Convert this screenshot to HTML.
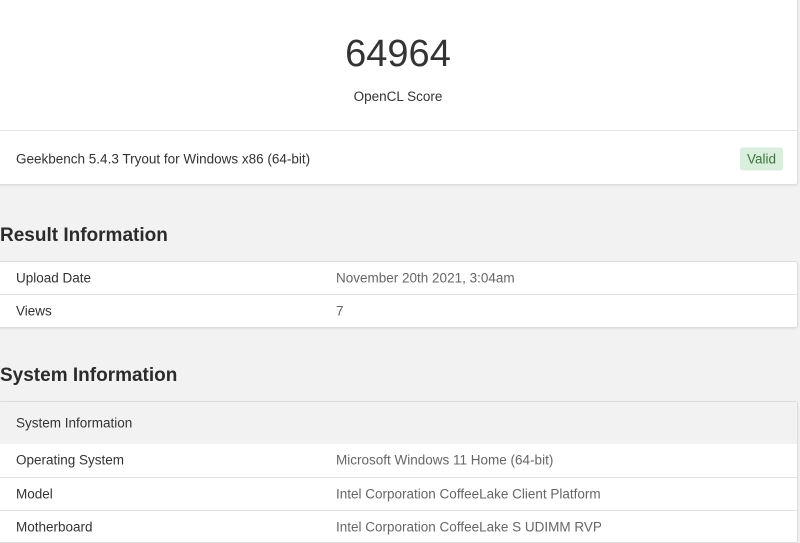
<!DOCTYPE html>
<html><head><style>
body{margin:0;width:800px;height:533px;overflow:hidden;background:#f2f2f2;font-family:"Liberation Sans",sans-serif;color:#333;}
.card{position:absolute;left:-2px;width:798px;background:#fff;border:1px solid #ddd;border-radius:3px;box-shadow:0 1px 2px rgba(0,0,0,.08);}
.row{position:absolute;left:0;right:0;border-top:1px solid #e3e3e3;font-size:13.5px;}
.row span{position:absolute;top:50%;transform:translateY(-50%);}
.k{left:17px;color:#333}.v{left:337px;color:#666}
h2{position:absolute;left:0;margin:0;font-size:19px;font-weight:bold;color:#2b2b2b}
</style></head><body>
<div class="card" style="top:-3px;height:186px;">
 <div style="position:absolute;top:35px;width:100%;text-align:center;font-size:38px;color:#333">64964</div>
 <div style="position:absolute;top:91px;width:100%;text-align:center;font-size:13.5px;color:#333">OpenCL Score</div>
 <div class="row" style="top:132px;height:55px;border-top:1px solid #e6e6e6"><span class="k">Geekbench 5.4.3 Tryout for Windows x86 (64-bit)</span>
 <span style="right:14px;left:auto;background:#d9eedd;color:#3c763d;padding:4px 7px;border-radius:3px;font-size:13.5px">Valid</span></div>
</div>
<h2 style="top:225px">Result Information</h2>
<div class="card" style="top:261px;height:65px;">
 <div class="row" style="top:0;height:32px;border:0"><span class="k">Upload Date</span><span class="v">November 20th 2021, 3:04am</span></div>
 <div class="row" style="top:32px;height:32px;"><span class="k">Views</span><span class="v">7</span></div>
</div>
<h2 style="top:365px">System Information</h2>
<div class="card" style="top:401px;height:140px;">
 <div class="row" style="top:0;height:42px;border:0;background:#f2f2f2"><span class="k">System Information</span></div>
 <div class="row" style="top:42px;height:32px;border:0"><span class="k">Operating System</span><span class="v">Microsoft Windows 11 Home (64-bit)</span></div>
 <div class="row" style="top:75px;height:32px;"><span class="k">Model</span><span class="v">Intel Corporation CoffeeLake Client Platform</span></div>
 <div class="row" style="top:108px;height:32px;"><span class="k">Motherboard</span><span class="v">Intel Corporation CoffeeLake S UDIMM RVP</span></div>
</div>
</body></html>
